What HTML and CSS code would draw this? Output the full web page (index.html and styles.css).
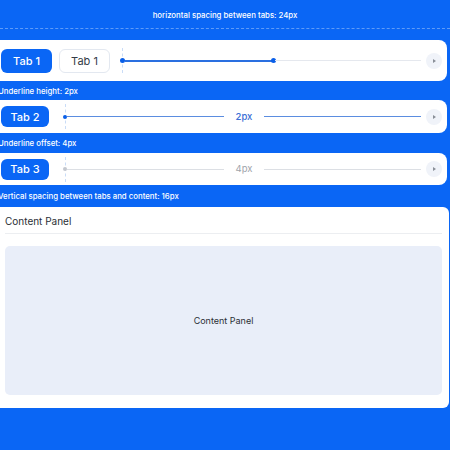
FILE: index.html
```html
<!DOCTYPE html>
<html>
<head>
<meta charset="utf-8">
<link rel="stylesheet" href="styles.css">
</head>
<body>
<div class="page">
  <div class="top">
    <div class="top-label">horizontal spacing between tabs: 24px</div>
    <div class="top-rule"></div>
  </div>

  <div class="card row1">
    <div class="tab tab-filled">Tab 1</div>
    <div class="tab tab-outline">Tab 1</div>
    <div class="track">
      <span class="dot blue"></span>
      <span class="seg seg-blue-thick w150"></span>
      <span class="dot blue"></span>
      <span class="seg seg-grey grow"></span>
    </div>
    <div class="nav"><span class="tri"></span></div>
  </div>

  <div class="label l1">Underline height: 2px</div>

  <div class="card row2">
    <div class="tab tab-filled narrow">Tab 2</div>
    <div class="track wide">
      <span class="dot blue small"></span>
      <span class="seg seg-blue grow"></span>
      <span class="measure blue-text">2px</span>
      <span class="seg seg-blue grow"></span>
    </div>
    <div class="nav"><span class="tri"></span></div>
  </div>

  <div class="label l2">Underline offset: 4px</div>

  <div class="card row3">
    <div class="tab tab-filled narrow">Tab 3</div>
    <div class="track wide">
      <span class="dot grey small"></span>
      <span class="seg seg-grey grow"></span>
      <span class="measure grey-text">4px</span>
      <span class="seg seg-grey grow"></span>
    </div>
    <div class="nav"><span class="tri"></span></div>
  </div>

  <div class="label l3">Vertical spacing between tabs and content: 16px</div>

  <div class="content-card">
    <div class="content-head">Content Panel</div>
    <div class="content-body">Content Panel</div>
  </div>
</div>
</body>
</html>
```

FILE: styles.css
```css
html, body {
  margin: 0;
  padding: 0;
}
body {
  width: 450px;
  height: 450px;
  overflow: hidden;
  background: #0a66f5;
  font-family: Inter, "Noto Sans", "Liberation Sans", sans-serif;
}
.page {
  display: flex;
  flex-direction: column;
}
.top {
  height: 40px;
  display: flex;
  flex-direction: column;
  align-items: center;
}
.top-label {
  margin-top: 10px;
  color: #ffffff;
  font-size: 7.8px;
  font-weight: 500;
  line-height: 11px;
}
.top-rule {
  margin-top: 7px;
  width: 100%;
  border-top: 1px dashed rgba(255, 255, 255, 0.35);
}
.card {
  width: 447px;
  background: #ffffff;
  border-radius: 0 8px 8px 0;
  display: flex;
  align-items: center;
  padding-left: 1px;
  box-sizing: border-box;
}
.row1 { height: 41px; }
.row2 { height: 33px; }
.row3 { height: 32px; }
.tab {
  height: 24px;
  width: 51px;
  box-sizing: border-box;
  border-radius: 6px;
  display: flex;
  align-items: center;
  justify-content: center;
  font-size: 11px;
  font-weight: 500;
}
.row2 .tab, .row3 .tab { height: 21px; }
.tab.narrow { width: 48px; }
.tab-filled {
  background: #0a66f5;
  color: #ffffff;
}
.tab-outline {
  margin-left: 7px;
  background: #ffffff;
  border: 1px solid #e3e8f0;
  color: #333b48;
  font-weight: 400;
}
.track {
  flex: 1;
  height: 25px;
  margin-left: 12px;
  border-left: 1px dashed #c9dcf7;
  display: flex;
  align-items: center;
}
.track.wide { margin-left: 16px; }
.dot {
  width: 5px;
  height: 5px;
  border-radius: 50%;
  flex: none;
  margin-left: -3px;
}
.seg + .dot { margin-left: -2px; margin-right: -1px; }
.dot.small { width: 4px; height: 4px; }
.dot.blue { background: #0a5fe8; }
.dot.grey { background: #c4c8cf; }
.seg { display: block; }
.w150 { width: 148px; flex: none; }
.grow { flex: 1; }
.seg-blue-thick { height: 2px; background: #2a6fe0; }
.seg-blue { height: 1px; background: #5b8de0; }
.seg-grey { height: 1px; background: #e5e8ee; }
.row3 .seg-grey { background: #dcdfe4; }
.measure {
  font-size: 9.5px;
  padding: 0 12px;
  line-height: 12px;
}
.blue-text { color: #3b6fd6; font-weight: 500; }
.grey-text { color: #a0a4ab; }
.nav {
  width: 16px;
  height: 16px;
  border-radius: 50%;
  background: #f0f3f9;
  margin: 0 5px 0 5px;
  flex: none;
  display: flex;
  align-items: center;
  justify-content: center;
}
.tri {
  width: 0;
  height: 0;
  border-left: 3px solid #8a8f98;
  border-top: 2px solid transparent;
  border-bottom: 2px solid transparent;
  margin-left: 1px;
}
.label {
  color: #ffffff;
  font-size: 7.8px;
  font-weight: 500;
  margin-left: -2px;
  display: flex;
  align-items: center;
}
.l1 { height: 19px; }
.l2 { height: 20px; }
.l3 { height: 21px; margin-bottom: 1px; }
.content-card {
  width: 449px;
  height: 201px;
  background: #ffffff;
  border-radius: 0 6px 6px 0;
  box-sizing: border-box;
  padding: 0 7px 13px 5px;
  display: flex;
  flex-direction: column;
}
.content-head {
  height: 27px;
  display: flex;
  align-items: center;
  padding-top: 2px;
  font-size: 10px;
  color: #2b2f36;
  border-bottom: 1px solid #eceef1;
  box-sizing: border-box;
  margin-bottom: 12px;
}
.content-body {
  flex: 1;
  background: #e9eef9;
  border-radius: 5px;
  display: flex;
  align-items: center;
  justify-content: center;
  font-size: 9px;
  color: #2b2f36;
}
```
